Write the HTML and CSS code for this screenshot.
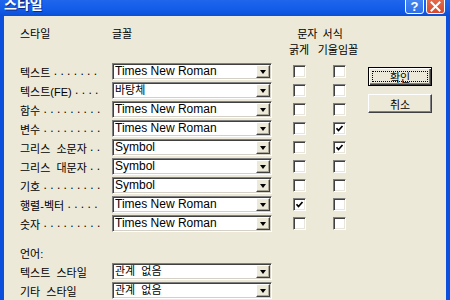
FILE: index.html
```html
<!DOCTYPE html>
<html lang="ko">
<head>
<meta charset="utf-8">
<title>스타일</title>
<link rel="stylesheet" href="styles.css">
</head>
<body>
<div class="window">
  <div class="titlebar">
    <span class="title">스타일</span>
    <div class="tb-btns">
      <span class="tb-btn help">?</span>
      <span class="tb-btn close"><svg width="11" height="11" viewBox="0 0 11 11"><path d="M1.5 1.5 L9.5 9.5 M9.5 1.5 L1.5 9.5" stroke="#fff" stroke-width="2" stroke-linecap="square"/></svg></span>
    </div>
  </div>
  <div class="dialog">
    <div class="content">
      <div class="left">
        <div class="head">
          <div class="head-line">
            <span class="h-label">스타일</span>
            <span class="h-font">글꼴</span>
            <span class="h-fmt">문자 서식</span>
          </div>
          <div class="head-line two">
            <span class="h-spacer"></span>
            <span class="h-bold">굵게</span>
            <span class="h-italic">기울임꼴</span>
          </div>
        </div>

        <div class="row">
          <div class="label"><span>텍스트</span><span class="leader"> . . . . . . .</span></div>
          <div class="combo"><span class="val">Times New Roman</span><span class="drop"><i></i></span></div>
          <span class="cb c1"></span><span class="cb c2"></span>
        </div>
        <div class="row">
          <div class="label"><span>텍스트(FE)</span><span class="leader"> . . . .</span></div>
          <div class="combo"><span class="val kr">바탕체</span><span class="drop"><i></i></span></div>
          <span class="cb c1"></span><span class="cb c2"></span>
        </div>
        <div class="row">
          <div class="label"><span>함수</span><span class="leader"> . . . . . . . . .</span></div>
          <div class="combo"><span class="val">Times New Roman</span><span class="drop"><i></i></span></div>
          <span class="cb c1"></span><span class="cb c2"></span>
        </div>
        <div class="row">
          <div class="label"><span>변수</span><span class="leader"> . . . . . . . . .</span></div>
          <div class="combo"><span class="val">Times New Roman</span><span class="drop"><i></i></span></div>
          <span class="cb c1"></span><span class="cb c2 on"><svg width="9" height="9" viewBox="0 0 9 9"><path d="M1.5 4.2 L3.5 6.5 L7.5 2" fill="none" stroke="#000" stroke-width="1.7"/></svg></span>
        </div>
        <div class="row">
          <div class="label"><span>그리스 소문자</span><span class="leader"> . .</span></div>
          <div class="combo"><span class="val">Symbol</span><span class="drop"><i></i></span></div>
          <span class="cb c1"></span><span class="cb c2 on"><svg width="9" height="9" viewBox="0 0 9 9"><path d="M1.5 4.2 L3.5 6.5 L7.5 2" fill="none" stroke="#000" stroke-width="1.7"/></svg></span>
        </div>
        <div class="row">
          <div class="label"><span>그리스 대문자</span><span class="leader"> . .</span></div>
          <div class="combo"><span class="val">Symbol</span><span class="drop"><i></i></span></div>
          <span class="cb c1"></span><span class="cb c2"></span>
        </div>
        <div class="row">
          <div class="label"><span>기호</span><span class="leader"> . . . . . . . . .</span></div>
          <div class="combo"><span class="val">Symbol</span><span class="drop"><i></i></span></div>
          <span class="cb c1"></span><span class="cb c2"></span>
        </div>
        <div class="row">
          <div class="label"><span>행렬-벡터</span><span class="leader"> . . . . .</span></div>
          <div class="combo"><span class="val">Times New Roman</span><span class="drop"><i></i></span></div>
          <span class="cb c1 on"><svg width="9" height="9" viewBox="0 0 9 9"><path d="M1.5 4.2 L3.5 6.5 L7.5 2" fill="none" stroke="#000" stroke-width="1.7"/></svg></span><span class="cb c2"></span>
        </div>
        <div class="row">
          <div class="label"><span>숫자</span><span class="leader"> . . . . . . . . .</span></div>
          <div class="combo"><span class="val">Times New Roman</span><span class="drop"><i></i></span></div>
          <span class="cb c1"></span><span class="cb c2"></span>
        </div>

        <div class="row lang">
          <div class="label"><span>언어:</span></div>
        </div>
        <div class="row">
          <div class="label"><span>텍스트 스타일</span></div>
          <div class="combo"><span class="val kr">관계 없음</span><span class="drop"><i></i></span></div>
        </div>
        <div class="row">
          <div class="label"><span>기타 스타일</span></div>
          <div class="combo"><span class="val kr">관계 없음</span><span class="drop"><i></i></span></div>
        </div>
      </div>
      <div class="buttons">
        <button class="btn default"><span class="focus">확인</span></button>
        <button class="btn">취소</button>
      </div>
    </div>
  </div>
</div>
</body>
</html>
```

FILE: styles.css
```css
html, body {
  margin: 0;
  padding: 0;
  overflow: hidden;
}
body {
  width: 450px;
  height: 300px;
  font-family: "Liberation Sans", "Noto Sans CJK KR", sans-serif;
  font-size: 12px;
  color: #000;
}
.window {
  width: 450px;
  height: 300px;
  display: flex;
  flex-direction: column;
  background: #0b4fdc;
}
.titlebar {
  height: 16px;
  flex: none;
  display: flex;
  align-items: flex-end;
  overflow: hidden;
  padding: 0 5px 0 4px;
  background: linear-gradient(to bottom, #2066ec 0%, #125ce8 60%, #0a4fd8 100%);
}
.title {
  font-family: "Noto Sans CJK KR", sans-serif;
  font-weight: bold;
  font-size: 14px;
  line-height: 14px;
  color: #fff;
  margin-bottom: 6px;
  text-shadow: 1px 1px 0 #0a2a8a;
}
.tb-btns {
  margin-left: auto;
  display: flex;
  gap: 2px;
  margin-bottom: 2px;
}
.tb-btn {
  box-sizing: border-box;
  width: 19px;
  height: 21px;
  border: 1px solid #fff;
  border-radius: 3px;
  display: flex;
  align-items: center;
  justify-content: center;
  padding-top: 5px;
}
.help {
  background: linear-gradient(to bottom, #4d8ff7, #2f6fe8);
  color: #fff;
  font-family: "Liberation Sans", sans-serif;
  font-weight: bold;
  font-size: 13px;
}
.close {
  background: linear-gradient(to bottom, #e8785a, #d94a2a);
}
.dialog {
  flex: 1;
  margin: 0 4px;
  background: #ece9d8;
}
.content {
  display: flex;
  padding-left: 16px;
}
.left {
  width: 326px;
  flex: none;
  display: flex;
  flex-direction: column;
}
.head {
  padding-top: 8px;
  margin-bottom: 5px;
  font-size: 11px;
  word-spacing: 2px;
}
.head-line {
  display: flex;
  height: 17px;
  align-items: center;
}
.head-line > span {
  flex: none;
  white-space: nowrap;
}
.head-line.two {
  height: 16px;
}
.h-label {
  width: 92px;
}
.h-font {
  width: 160px;
}
.h-fmt {
  width: 96px;
  display: flex;
  justify-content: center;
}
.h-spacer {
  width: 252px;
}
.h-bold {
  width: 54px;
  display: flex;
  justify-content: center;
}
.h-italic {
  width: 48px;
  margin-left: -12px;
  display: flex;
  justify-content: center;
  word-spacing: 0;
}
.row {
  display: flex;
  align-items: center;
  height: 19px;
  flex: none;
}
.row.lang {
  margin-top: 10px;
}
.label {
  width: 86px;
  margin-right: 6px;
  flex: none;
  display: flex;
  white-space: nowrap;
  font-size: 11px;
  word-spacing: 3px;
}
.leader {
  white-space: pre;
  font-size: 12px;
  word-spacing: 0;
  font-family: "Liberation Sans", sans-serif;
}
.combo {
  box-sizing: border-box;
  width: 160px;
  height: 17px;
  flex: none;
  background: #fff;
  border: 1px solid;
  border-color: #808080 #fff #fff #808080;
  box-shadow: inset 1px 1px 0 #404040, inset -1px -1px 0 #d4d0c8;
  display: flex;
  align-items: center;
  padding: 0 1px 0 2px;
}
.val {
  flex: 1;
  white-space: nowrap;
  line-height: 15px;
}
.val.kr {
  font-size: 11px;
  word-spacing: 3px;
}
.drop {
  box-sizing: border-box;
  width: 14px;
  height: 13px;
  flex: none;
  background: #ece9d8;
  border: 1px solid;
  border-color: #fff #404040 #404040 #fff;
  box-shadow: inset -1px -1px 0 #aca899;
  display: flex;
  align-items: center;
  justify-content: center;
}
.drop i {
  width: 0;
  height: 0;
  border-left: 3.5px solid transparent;
  border-right: 3.5px solid transparent;
  border-top: 4px solid #000;
  margin-top: 1px;
}
.cb {
  box-sizing: border-box;
  width: 13px;
  height: 13px;
  background: #fff;
  border: 1px solid;
  border-color: #808080 #fff #fff #808080;
  box-shadow: inset 1px 1px 0 #404040, inset -1px -1px 0 #e8e6dc;
  display: flex;
  align-items: center;
  justify-content: center;
  flex: none;
}
.cb.c1 {
  margin-left: 21px;
}
.cb.c2 {
  margin-left: 27px;
}
.buttons {
  margin-left: 22px;
  margin-top: 51px;
  display: flex;
  flex-direction: column;
  gap: 8px;
}
.btn {
  box-sizing: border-box;
  width: 64px;
  height: 19px;
  margin: 0;
  padding: 0;
  background: #ece9d8;
  border: 1px solid;
  border-color: #fff #404040 #404040 #fff;
  box-shadow: inset -1px -1px 0 #808080;
  font-family: "Noto Sans CJK KR", sans-serif;
  font-size: 11px;
  color: #000;
  display: flex;
  align-items: center;
  justify-content: center;
}
.btn.default {
  border: 1px solid #000;
  box-shadow: inset 1px 1px 0 #fff, inset -1px -1px 0 #404040, inset -2px -2px 0 #808080;
  padding: 3px;
}
.focus {
  flex: 1;
  align-self: stretch;
  border: 1px dotted #000;
  display: flex;
  align-items: center;
  justify-content: center;
}
```
